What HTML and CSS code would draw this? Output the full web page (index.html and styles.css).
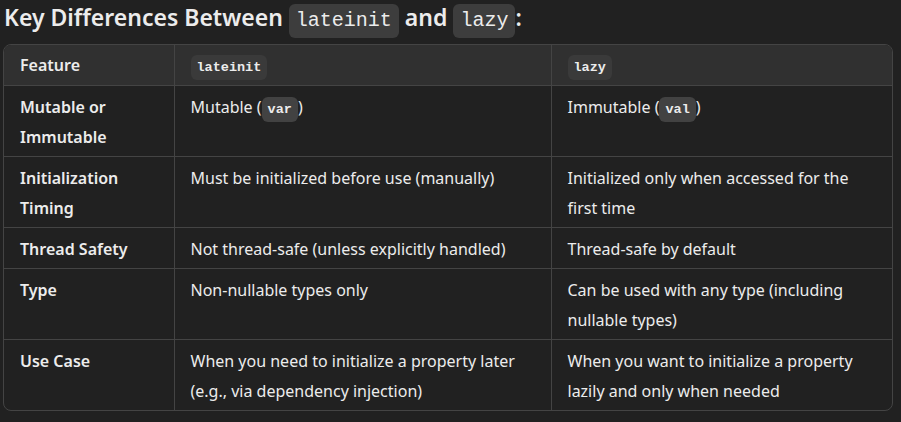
FILE: index.html
```html
<!DOCTYPE html>
<html>
<head>
<meta charset="utf-8">
<link rel="stylesheet" href="styles.css">
</head>
<body>
<div class="page">
  <h3 class="title">Key Differences Between <code class="tcode">lateinit</code> and <code class="tcode">lazy</code>:</h3>
  <div class="table-wrap">
    <table class="grid">
      <colgroup><col class="c1"><col class="c2"><col class="c3"></colgroup>
      <thead>
        <tr><th>Feature</th><th><code class="hcode">lateinit</code></th><th><code class="hcode">lazy</code></th></tr>
      </thead>
      <tbody>
        <tr><td class="k">Mutable or Immutable</td><td>Mutable (<code class="bcode">var</code>)</td><td>Immutable (<code class="bcode">val</code>)</td></tr>
        <tr><td class="k">Initialization Timing</td><td>Must be initialized before use (manually)</td><td>Initialized only when accessed for the first time</td></tr>
        <tr><td class="k">Thread Safety</td><td>Not thread-safe (unless explicitly handled)</td><td>Thread-safe by default</td></tr>
        <tr><td class="k">Type</td><td>Non-nullable types only</td><td>Can be used with any type (including nullable types)</td></tr>
        <tr><td class="k">Use Case</td><td>When you need to initialize a property later (e.g., via dependency injection)</td><td>When you want to initialize a property lazily and only when needed</td></tr>
      </tbody>
    </table>
  </div>
</div>
</body>
</html>
```
FILE: styles.css
```css
html, body { margin: 0; padding: 0; background: #212121; }
body { color: #ececec; font-family: "Noto Sans", "Open Sans", sans-serif; font-size: 16px; }
.page { padding: 0 8px 0 3px; }
.title { margin: 0 0 9px 1px; font-size: 23px; font-weight: 600; line-height: 35px; }
code { font-family: "Liberation Mono", "DejaVu Sans Mono", monospace; border-radius: 6px; line-height: 1; }
.tcode { background: #3d3d3d; font-size: 20px; padding: 5px 7px 6px; font-weight: 400; }
.table-wrap { border: 1px solid #444; border-radius: 8px; overflow: hidden; width: 888px; }
.grid { border-collapse: collapse; width: 100%; table-layout: fixed; }
.c1 { width: 170px; }
.c2 { width: 377px; }
th, td { text-align: left; vertical-align: top; line-height: 30px; padding: 5px 16px 5px 16px; border-left: 1px solid #444; border-top: 1px solid #444; }
th:first-child, td:first-child { border-left: none; }
thead tr th { border-top: none; background: #303030; font-weight: 600; font-size: 16px; }
td { padding-top: 6px; padding-bottom: 4px; }
.k { font-weight: 600; }
.hcode { background: #3a3a3a; font-size: 13.5px; font-weight: 700; padding: 5px 6px; }
.bcode { background: #424242; font-size: 13.5px; font-weight: 700; padding: 5px 6px; }
```
